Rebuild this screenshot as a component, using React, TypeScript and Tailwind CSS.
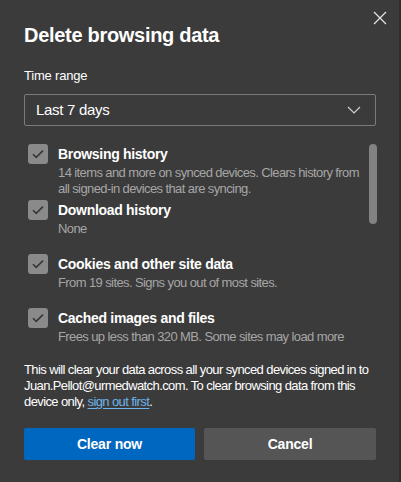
import React from "react";

const font = { fontFamily: '"Segoe UI", "Liberation Sans", Arial, sans-serif' };

function Check() {
  return (
    <div className="w-[20px] h-[20px] rounded-[3px] bg-[#8a8a8a] flex items-center justify-center shrink-0">
      <svg width="12" height="10" viewBox="0 0 12 10" fill="none">
        <path d="M1 5.2 L4.2 8.4 L11 1.6" stroke="#363636" strokeWidth="1.6" />
      </svg>
    </div>
  );
}

function Item({ title, desc, h }: { title: string; desc: string; h: string }) {
  return (
    <div className={`flex gap-[10px] shrink-0 ${h}`}>
      <Check />
      <div className="flex flex-col min-w-0 flex-1">
        <div className="text-[14px] font-bold text-white leading-[20px] tracking-[-0.3px]">{title}</div>
        <div className="text-[13px] text-[#a6a6a6] leading-[16px] mt-[1px] tracking-[-0.6px]">{desc}</div>
      </div>
    </div>
  );
}

export default function App() {
  return (
    <div className="w-[401px] h-[482px] bg-[#3b3b3b] relative overflow-hidden" style={font}>
      <button className="absolute right-[14px] top-[11px] w-[14px] h-[14px]">
        <svg width="14" height="14" viewBox="0 0 14 14">
          <path d="M1 1 L13 13 M13 1 L1 13" stroke="#e6e6e6" strokeWidth="1.2" />
        </svg>
      </button>
      <div className="absolute right-0 top-0 w-[2px] h-full bg-[#2f2f2f]" />
      <div className="px-[24px] pt-[22px] flex flex-col">
        <h1 className="text-[20px] font-semibold text-white leading-[26px] tracking-[-0.3px]">Delete browsing data</h1>
        <div className="mt-[20px] text-[13px] text-white leading-[16px] tracking-[-0.2px]">Time range</div>
        <div className="mt-[10px] w-[352px] h-[32px] border border-[#7a7a7a] rounded-[2px] flex items-center justify-between pl-[11px] pr-[14px] shrink-0">
          <span className="text-[15px] text-white tracking-[-0.3px]">Last 7 days</span>
          <svg width="14" height="8" viewBox="0 0 14 8">
            <path d="M1 1 L7 7 L13 1" stroke="#d0d0d0" strokeWidth="1.2" fill="none" />
          </svg>
        </div>
        <div className="mt-[18px] flex h-[204px] overflow-hidden pl-[4px] shrink-0">
          <div className="flex flex-col flex-1 min-w-0">
            <Item h="h-[56px]" title="Browsing history" desc="14 items and more on synced devices. Clears history from all signed-in devices that are syncing." />
            <Item h="h-[54px]" title="Download history" desc="None" />
            <Item h="h-[54px]" title="Cookies and other site data" desc="From 19 sites. Signs you out of most sites." />
            <Item h="h-[54px]" title="Cached images and files" desc="Frees up less than 320 MB. Some sites may load more" />
          </div>
          <div className="w-[8px] h-[80px] rounded-full bg-[#828282] shrink-0" />
        </div>
        <p className="mt-[14px] w-[356px] text-[13px] text-white leading-[16px] tracking-[-0.6px]">
          This will clear your data across all your synced devices signed in to Juan.Pellot@urmedwatch.com. To clear browsing data from this device only,{" "}
          <span className="text-[#6cb4ee] underline underline-offset-2">sign out first</span>.
        </p>
        <div className="mt-[18px] flex gap-[9px]">
          <button className="w-[171px] h-[32px] rounded-[2px] bg-[#0067c0] text-white text-[14px] font-bold tracking-[-0.2px]">Clear now</button>
          <button className="w-[172px] h-[32px] rounded-[2px] bg-[#555555] text-white text-[14px] font-bold tracking-[-0.2px]">Cancel</button>
        </div>
      </div>
    </div>
  );
}
